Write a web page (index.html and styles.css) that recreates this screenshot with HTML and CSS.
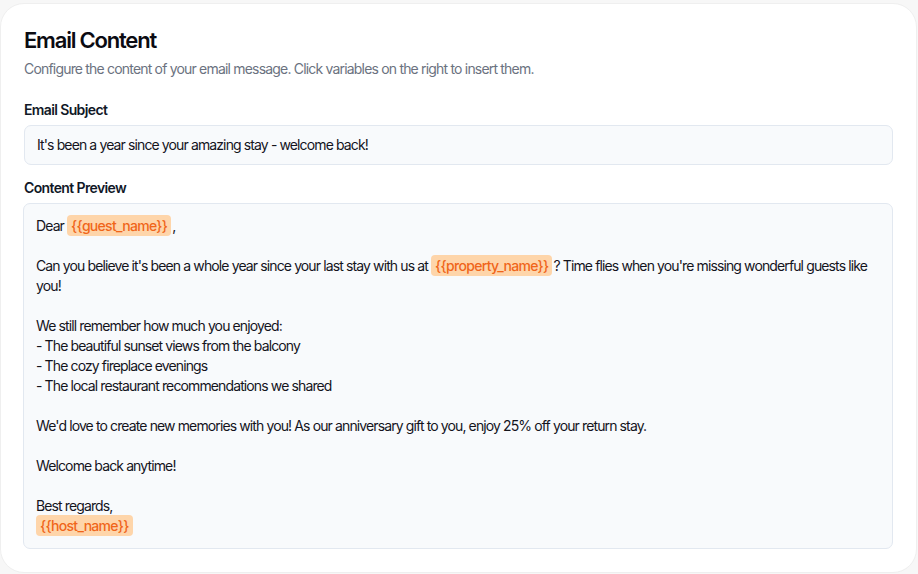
FILE: index.html
```html
<!DOCTYPE html>
<html lang="en">
<head>
<meta charset="utf-8">
<title>Email Content</title>
<link rel="stylesheet" href="styles.css">
</head>
<body>
<div class="card">
  <h1 class="title">Email Content</h1>
  <p class="subtitle">Configure the content of your email message. Click variables on the right to insert them.</p>
  <div class="field">
    <label class="label">Email Subject</label>
    <div class="input">It's been a year since your amazing stay - welcome back!</div>
  </div>
  <div class="field">
    <label class="label">Content Preview</label>
    <div class="preview">Dear <span class="var">{{guest_name}}</span>,

Can you believe it's been a whole year since your last stay with us at <span class="var">{{property_name}}</span>? Time flies when you're missing wonderful guests like you!

We still remember how much you enjoyed:
- The beautiful sunset views from the balcony
- The cozy fireplace evenings
- The local restaurant recommendations we shared

We'd love to create new memories with you! As our anniversary gift to you, enjoy 25% off your return stay.

Welcome back anytime!

Best regards,
<span class="var">{{host_name}}</span></div>
  </div>
</div>
</body>
</html>
```
FILE: styles.css
```css
* { box-sizing: border-box; }
html, body { margin: 0; padding: 0; }
body {
  background: #f7f7f7;
  font-family: Inter, "Noto Sans", sans-serif;
  color: #14141c;
  width: 918px;
  height: 574px;
  overflow: hidden;
  letter-spacing: -0.055em;
}
.card {
  margin: 3px 1px 0 0;
  height: 570px;
  background: #fff;
  border: 1px solid #efefef;
  border-radius: 24px;
  padding: 22px 23px 20px 22px;
}
.title {
  margin: 0;
  padding-left: 1px;
  font-size: 22px;
  line-height: 28px;
  font-weight: 600;
  letter-spacing: -0.055em;
  color: #0b0b12;
}
.subtitle {
  margin: 5px 0 0;
  padding-left: 1px;
  font-size: 14px;
  line-height: 20px;
  color: #6b7280;
  letter-spacing: -0.058em;
}
.field { display: flex; flex-direction: column; gap: 5px; }
.field:first-of-type { margin-top: 21px; }
.field + .field { margin-top: 13px; }
.label {
  padding-left: 1px;
  font-size: 14px;
  line-height: 20px;
  font-weight: 600;
  letter-spacing: -0.045em;
  color: #111827;
}
.input {
  height: 40px;
  background: #f8fafc;
  border: 1px solid #e2e8f0;
  border-radius: 7px;
  padding: 9px 12px;
  font-size: 14px;
  line-height: 20px;
  margin-left: 1px;
}
.preview {
  background: #f8fafc;
  border: 1px solid #e2e8f0;
  border-radius: 7px;
  padding: 12px;
  font-size: 14px;
  line-height: 20px;
  white-space: pre-wrap;
}
.var {
  background: #fed5aa;
  color: #f0651a;
  font-weight: 500;
  letter-spacing: -0.05em;
  border-radius: 4px;
  padding: 2px 4px;
  margin: 0 1px 0 0;
}
```
